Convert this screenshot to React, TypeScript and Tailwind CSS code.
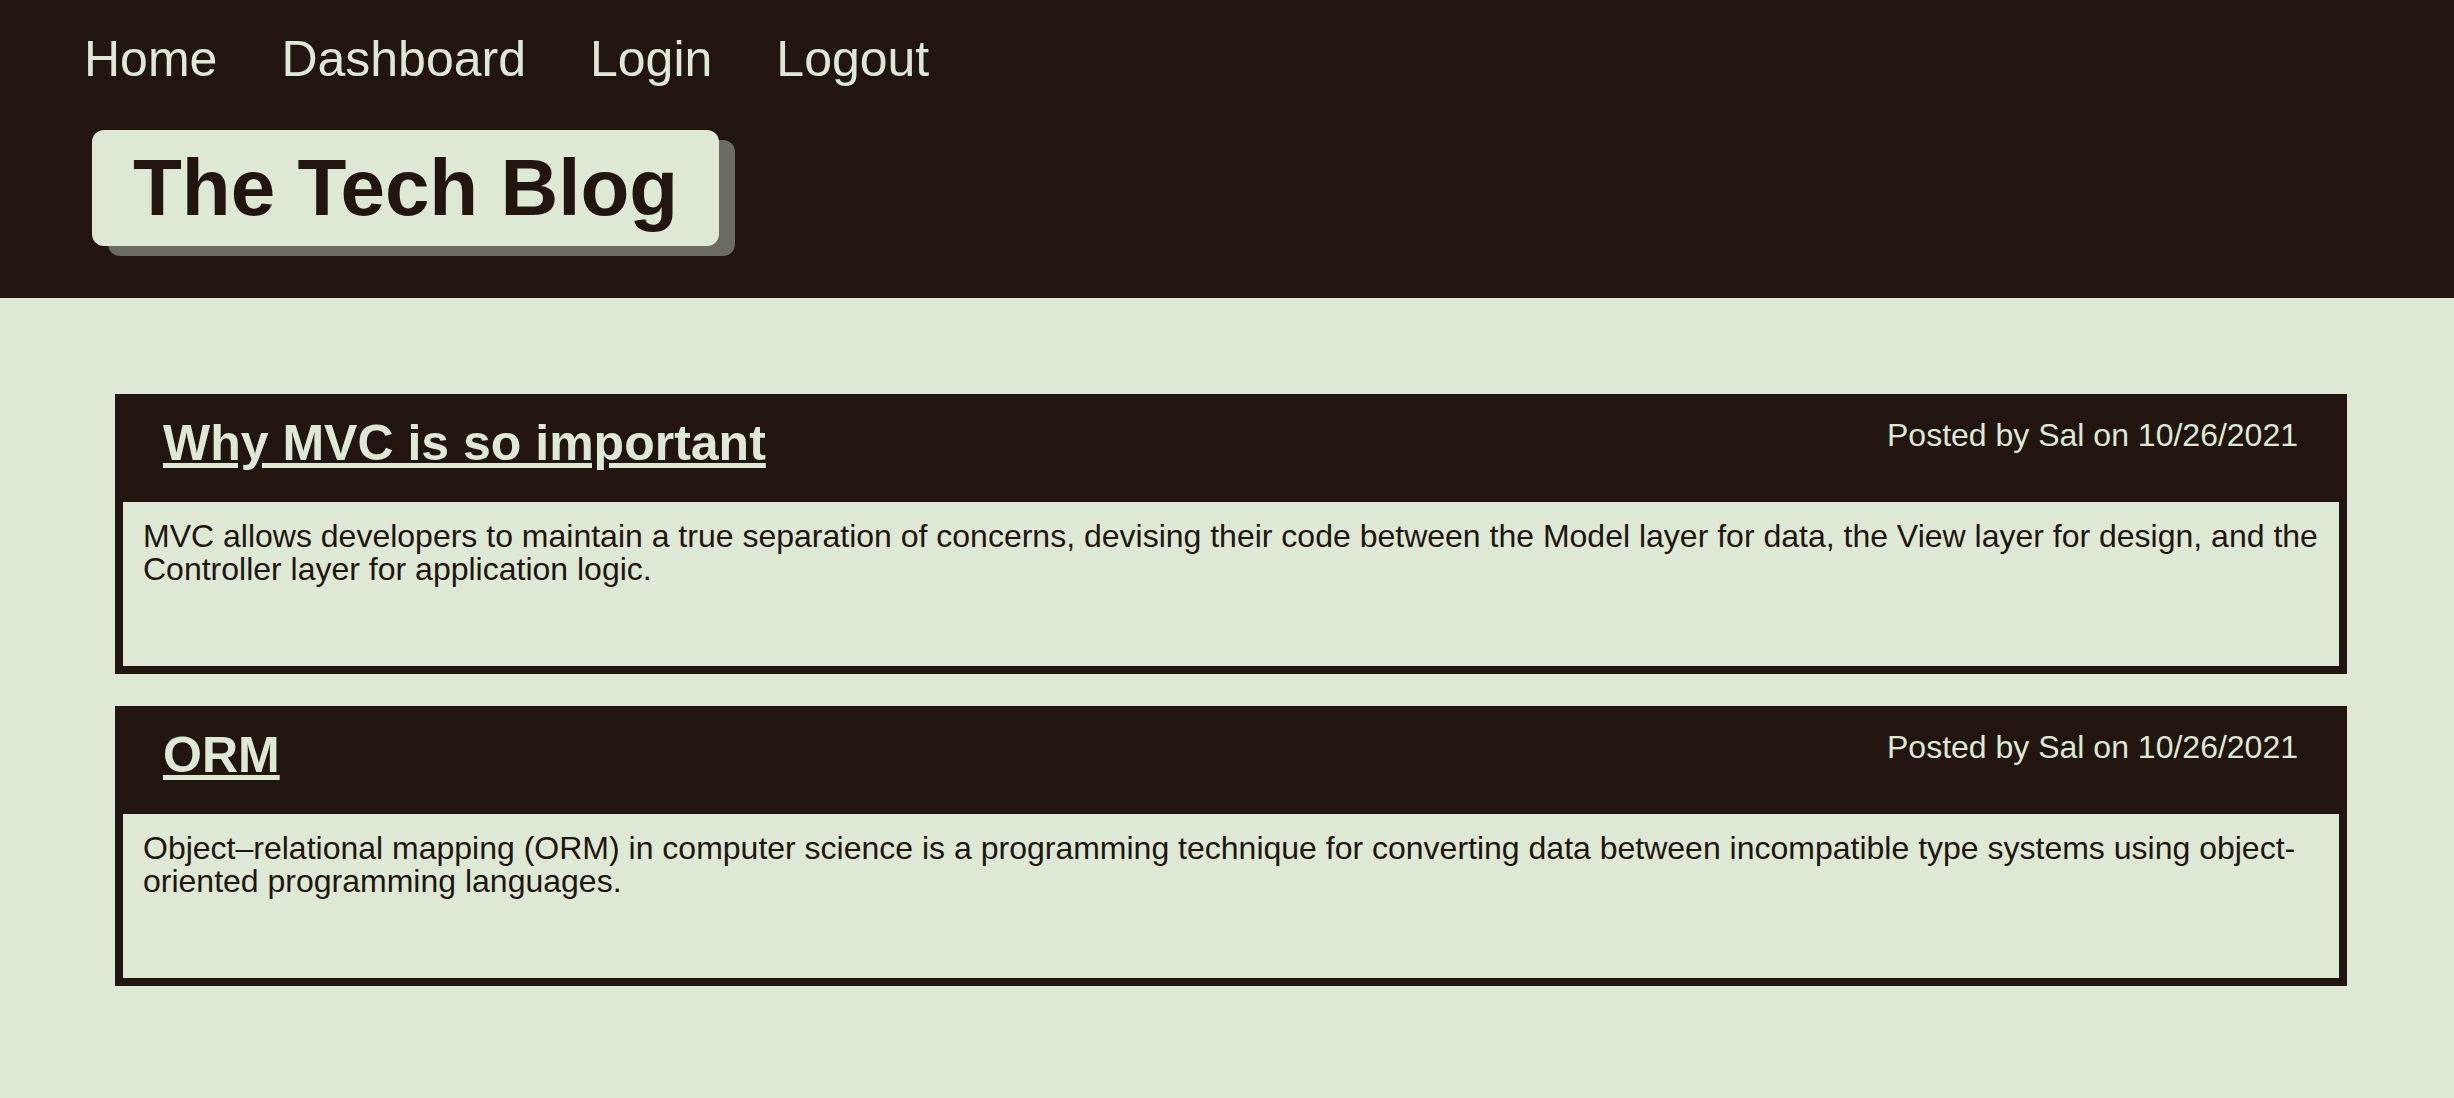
import React from "react";

const posts = [
  {
    title: "Why MVC is so important",
    author: "Sal",
    date: "10/26/2021",
    body: "MVC allows developers to maintain a true separation of concerns, devising their code between the Model layer for data, the View layer for design, and the Controller layer for application logic.",
  },
  {
    title: "ORM",
    author: "Sal",
    date: "10/26/2021",
    body: "Object–relational mapping (ORM) in computer science is a programming technique for converting data between incompatible type systems using object-oriented programming languages.",
  },
];

function Header() {
  return (
    <header className="h-[298px] bg-[#221510] pl-[84px] pt-[34px]">
      <nav className="flex gap-[64px] text-[50px] leading-none text-[#dde8d5]">
        <a href="#">Home</a>
        <a href="#">Dashboard</a>
        <a href="#">Login</a>
        <a href="#">Logout</a>
      </nav>
      <div className="ml-[8px] mt-[46px] inline-block rounded-xl bg-[#dde8d5] px-[41px] py-[18px] shadow-[16px_10px_0_#6b6b60]">
        <h1 className="text-[80px] font-bold leading-none text-[#221510]">The Tech Blog</h1>
      </div>
    </header>
  );
}

function PostCard({ post }: { post: (typeof posts)[number] }) {
  return (
    <article className="bg-[#221510] px-[8px] pb-[8px]">
      <div className="flex h-[108px] items-start justify-between">
        <a
          href="#"
          className="pl-[40px] pt-[24px] text-[50px] font-bold leading-none text-[#dde8d5] underline"
        >
          {post.title}
        </a>
        <p className="pr-[41px] pt-[25px] text-[32px] leading-none text-[#dde8d5]">
          Posted by {post.author} on {post.date}
        </p>
      </div>
      <div className="h-[164px] bg-[#dde8d5] pb-5 pl-5 pr-3 pt-[18px] text-[32px] leading-[33px] text-[#221510]">
        {post.body}
      </div>
    </article>
  );
}

export default function App() {
  return (
    <div className="min-h-screen bg-[#dde8d5] font-['Liberation_Sans',Arial,Helvetica,sans-serif]">
      <Header />
      <main className="flex flex-col gap-[32px] pl-[115px] pr-[107px] pt-[96px]">
        {posts.map((post) => (
          <PostCard key={post.title} post={post} />
        ))}
      </main>
    </div>
  );
}
